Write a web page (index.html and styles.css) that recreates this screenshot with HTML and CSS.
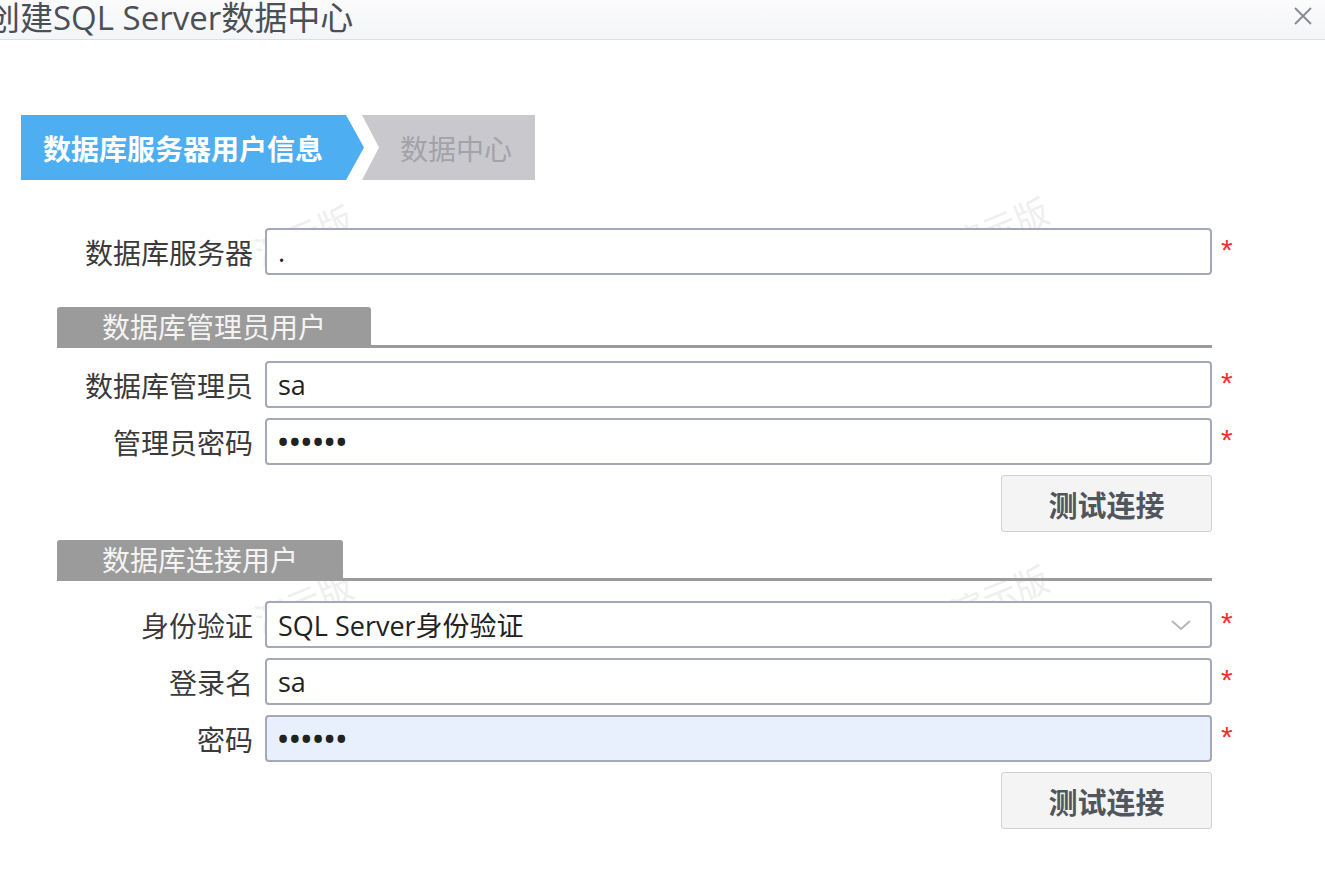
FILE: index.html
```html
<!DOCTYPE html>
<html lang="zh-CN">
<head>
<meta charset="utf-8">
<title>创建SQL Server数据中心</title>
<link rel="stylesheet" href="styles.css">
</head>
<body>
<div class="dialog">
  <div class="titlebar">
    <div class="title">创建SQL Server数据中心</div>
    <div class="close">
      <svg width="20" height="20" viewBox="0 0 20 20"><path d="M2 2 L18 18 M18 2 L2 18" stroke="#8a8d93" stroke-width="2" fill="none"/></svg>
    </div>
  </div>

  <div class="body">
    <div class="watermark wm1">演示版</div>
    <div class="watermark wm2">演示版</div>
    <div class="watermark wm3">演示版</div>
    <div class="watermark wm4">演示版</div>

    <div class="steps">
      <div class="step active">数据库服务器用户信息</div>
      <div class="step next">数据中心</div>
    </div>

    <div class="row first">
      <label class="lbl">数据库服务器</label>
      <input class="field" type="text" value=".">
      <span class="req">*</span>
    </div>

    <div class="section s1"><div class="tab">数据库管理员用户</div></div>

    <div class="row after-section">
      <label class="lbl">数据库管理员</label>
      <input class="field" type="text" value="sa">
      <span class="req">*</span>
    </div>
    <div class="row">
      <label class="lbl">管理员密码</label>
      <input class="field pwd" type="password" value="123456">
      <span class="req">*</span>
    </div>
    <div class="btn-row"><button class="btn">测试连接</button></div>

    <div class="section s2"><div class="tab">数据库连接用户</div></div>

    <div class="row after-section2">
      <label class="lbl">身份验证</label>
      <div class="field select">
        <span>SQL Server身份验证</span>
        <svg width="22" height="12" viewBox="0 0 22 12"><path d="M2 2 L11 10 L20 2" stroke="#b4b6bb" stroke-width="2" fill="none"/></svg>
      </div>
      <span class="req">*</span>
    </div>
    <div class="row">
      <label class="lbl">登录名</label>
      <input class="field" type="text" value="sa">
      <span class="req">*</span>
    </div>
    <div class="row">
      <label class="lbl">密码</label>
      <input class="field pwd autofill" type="password" value="123456">
      <span class="req">*</span>
    </div>
    <div class="btn-row"><button class="btn">测试连接</button></div>
  </div>
</div>
</body>
</html>
```

FILE: styles.css
```css
* { box-sizing: border-box; }
html, body { margin: 0; padding: 0; background: #ffffff; }
body {
  font-family: "Open Sans", "Noto Sans CJK SC", sans-serif;
  color: #333;
  width: 1325px;
  height: 871px;
  overflow: hidden;
}
.titlebar {
  height: 40px;
  border-bottom: 1px solid #dcdee3;
  background: linear-gradient(#fbfbfc, #f4f5f7);
  display: flex;
  align-items: center;
  justify-content: space-between;
}
.title {
  margin-left: -13px;
  font-size: 33px;
  color: #4b5057;
  line-height: 38px;
  margin-top: -4px;
  white-space: nowrap;
}
.close {
  margin-right: 12px;
  margin-top: -8px;
  display: flex;
}
.body {
  position: relative;
  padding-top: 75px;
}
.watermark {
  position: absolute;
  font-size: 34px;
  color: #efefef;
  transform: rotate(-22deg);
  font-family: "Noto Sans CJK SC", sans-serif;
  z-index: 0;
}
.wm1 { left: 252px; top: 170px; }
.wm2 { left: 948px; top: 162px; }
.wm3 { left: 252px; top: 537px; }
.wm4 { left: 948px; top: 530px; }

.steps {
  display: flex;
  margin-left: 21px;
  height: 65px;
  position: relative;
  z-index: 1;
}
.step {
  font-size: 28px;
  display: flex;
  align-items: center;
  font-family: "Noto Sans CJK SC", sans-serif;
}
.step.active {
  width: 343px;
  background: #4daff1;
  color: #fff;
  font-weight: bold;
  padding-left: 22px;
  clip-path: polygon(0 0, 325px 0, 343px 50%, 325px 100%, 0 100%);
}
.step.next {
  width: 173px;
  margin-left: -2px;
  background: #c9c9cd;
  color: #a2a2a9;
  padding-left: 38px;
  clip-path: polygon(0 0, 100% 0, 100% 100%, 0 100%, 17px 50%);
}
.row {
  display: flex;
  align-items: center;
  margin-top: 10px;
  position: relative;
  z-index: 1;
}
.row.first { margin-top: 48px; }
.row.after-section { margin-top: 13px; }
.row.after-section2 { margin-top: 20px; }
.lbl {
  width: 253px;
  text-align: right;
  font-size: 28px;
  color: #3a3a3a;
  font-family: "Noto Sans CJK SC", sans-serif;
  margin-right: 12px;
}
.field {
  width: 947px;
  height: 47px;
  border: 2px solid #a4a8ba;
  border-radius: 4px;
  background: #fff;
  font-family: "Open Sans", "Noto Sans CJK SC", sans-serif;
  font-size: 27px;
  color: #222;
  padding: 0 11px;
  outline: none;
}
.field.pwd { letter-spacing: 1.5px; font-weight: bold; }
.field.autofill { background: #e8f0fe; }
.select {
  display: flex;
  align-items: center;
  justify-content: space-between;
  padding-right: 18px;
}
.req {
  color: #f23030;
  font-size: 30px;
  line-height: 30px;
  margin-left: 9px;
  align-self: flex-start;
  margin-top: 7px;
  font-family: "Liberation Sans", sans-serif;
}
.btn-row {
  width: 1212px;
  display: flex;
  justify-content: flex-end;
  margin-top: 10px;
  position: relative;
  z-index: 1;
}
.btn {
  width: 211px;
  height: 57px;
  background: #f4f4f5;
  border: 1px solid #cfd0d2;
  border-radius: 3px;
  font-family: "Noto Sans CJK SC", sans-serif;
  font-weight: bold;
  font-size: 29px;
  color: #51565d;
  padding: 0;
}
.section {
  margin-left: 57px;
  width: 1155px;
  border-bottom: 3px solid #9b9b9b;
  display: flex;
  position: relative;
  z-index: 1;
}
.section.s1 { margin-top: 32px; }
.section.s2 { margin-top: 8px; }
.tab {
  background: #9b9b9b;
  color: #f4f4f4;
  font-size: 28px;
  height: 38px;
  line-height: 38px;
  padding: 0 45px;
  border-radius: 3px 3px 0 0;
  font-family: "Noto Sans CJK SC", sans-serif;
}
```
